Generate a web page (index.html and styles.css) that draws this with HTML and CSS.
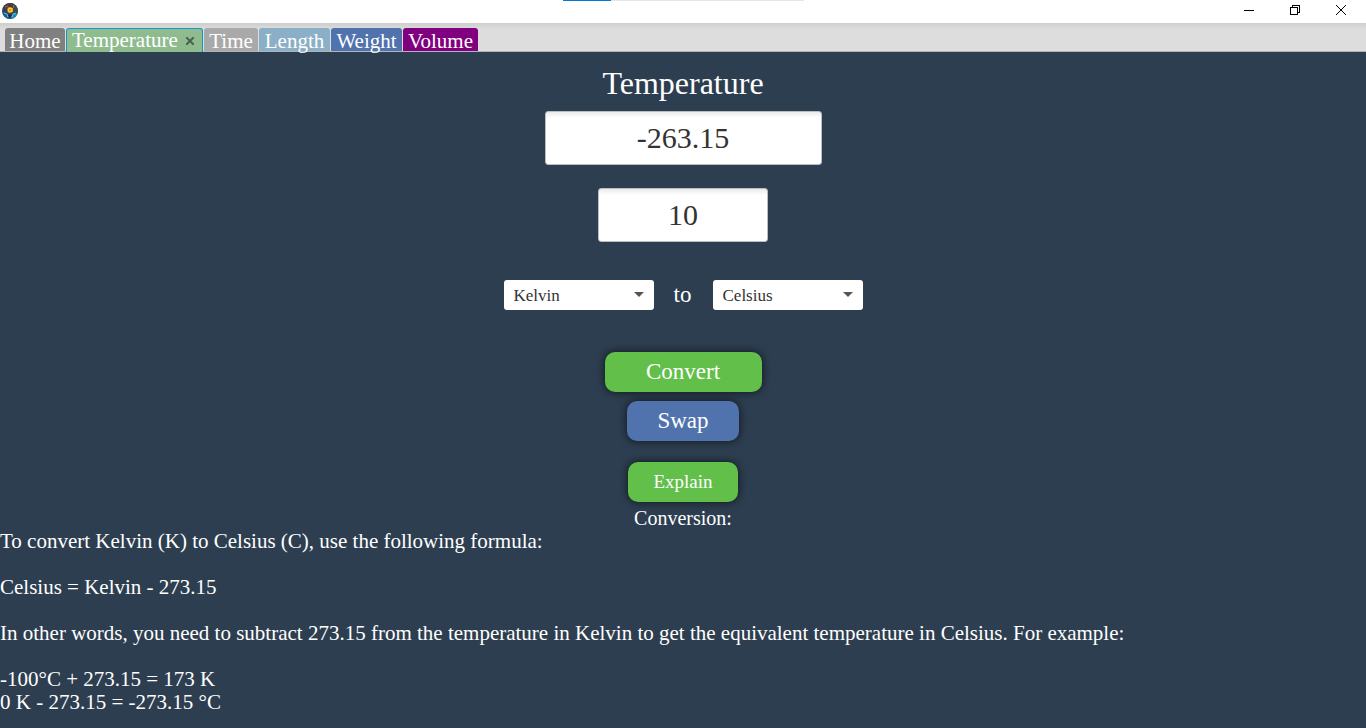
FILE: index.html
```html
<!DOCTYPE html>
<html lang="en">
<head>
<meta charset="utf-8">
<title>Unit Converter</title>
<link rel="stylesheet" href="styles.css">
</head>
<body>
<header class="titlebar">
  <svg class="app-icon" viewBox="0 0 16 16" aria-hidden="true">
    <circle cx="8" cy="8" r="8" fill="#28475c"/>
    <path d="M1 5a8 8 0 0 1 11-4L9 4 5 4 3 7z" fill="#4b3b35"/>
    <path d="M12 1a8 8 0 0 1 3 10l-3-2-1-5z" fill="#3f4c46"/>
    <path d="M1 9l3 1 2 3 1 3A8 8 0 0 1 1 9z" fill="#1c5f91"/>
    <path d="M9 13l3-3 3 1a8 8 0 0 1-6 5z" fill="#2189c4"/>
    <path d="M2 10l3 1 1 3M10 14l1-3 3-1" fill="none" stroke="#58c4ee"/>
    <path d="M3 4l3-1M11 2l1 3" fill="none" stroke="#a7674a"/>
    <circle cx="8" cy="7" r="3" fill="#e8702a"/>
    <path d="M8 4l1 1 2 0 0 2 0 2-2 0-2 1-1-2 0-3z" fill="#f9a81f"/>
    <circle cx="8" cy="7" r="2" fill="#ffd83a"/>
    <circle cx="8" cy="7" r="1" fill="#f26a2a"/>
    <path d="M6 12h4l-2 3z" fill="#182b3c"/>
  </svg>
  <div class="progress"><div class="progress-fill"></div></div>
  <div class="window-controls">
    <button class="window-button" aria-label="Minimize"><svg viewBox="0 0 10 10" shape-rendering="crispEdges"><path d="M0 5.5h10"/></svg></button>
    <button class="window-button" aria-label="Restore"><svg viewBox="0 0 10 10" shape-rendering="crispEdges"><path d="M.5 2.5h7v7h-7zM2.5 2.5v-2h7v7h-2"/></svg></button>
    <button class="window-button" aria-label="Close"><svg viewBox="0 0 10 10"><path d="M0 0l10 10M10 0L0 10"/></svg></button>
  </div>
</header>
<nav class="tabs" role="tablist">
  <button class="tab tab-home" role="tab">Home</button>
  <div class="tab tab-temperature">
    <button class="tab-label" role="tab" aria-selected="true">Temperature</button>
    <button class="tab-close" aria-label="Close tab"><svg viewBox="0 0 8 8"><path d="M0 0l8 8M8 0L0 8"/></svg></button>
  </div>
  <button class="tab tab-time" role="tab">Time</button>
  <button class="tab tab-length" role="tab">Length</button>
  <button class="tab tab-weight" role="tab">Weight</button>
  <button class="tab tab-volume" role="tab">Volume</button>
</nav>
<main class="converter">
  <h1 class="title">Temperature</h1>
  <input class="value value-result" type="text" aria-label="Result" value="-263.15">
  <input class="value value-input" type="text" aria-label="Value" value="10">
  <div class="units">
    <div class="unit">
      <select class="unit-select" aria-label="From unit"><option>Kelvin</option><option>Celsius</option></select>
      <svg class="arrow" viewBox="0 0 10 5" aria-hidden="true"><path d="M0 0h10L5 5z"/></svg>
    </div>
    <span class="to">to</span>
    <div class="unit">
      <select class="unit-select" aria-label="To unit"><option>Celsius</option><option>Kelvin</option></select>
      <svg class="arrow" viewBox="0 0 10 5" aria-hidden="true"><path d="M0 0h10L5 5z"/></svg>
    </div>
  </div>
  <button class="action convert">Convert</button>
  <button class="action swap">Swap</button>
  <button class="action explain">Explain</button>
  <p class="caption">Conversion:</p>
  <div class="explanation">To convert Kelvin (K) to Celsius (C), use the following formula:

Celsius = Kelvin - 273.15

In other words, you need to subtract 273.15 from the temperature in Kelvin to get the equivalent temperature in Celsius. For example:

-100°C + 273.15 = 173 K
0 K - 273.15 = -273.15 °C</div>
</main>
</body>
</html>
```
FILE: styles.css
```css
* { box-sizing: border-box; }
body {
  margin: 0;
  min-height: 100vh;
  background: #2d3e50;
  color: #fff;
  font-family: "Liberation Serif", serif;
}
button, input, select { font-family: inherit; }
button { margin: 0; padding: 0; border: 0; color: inherit; }

.titlebar {
  display: grid;
  grid-template-columns: 1fr 241px 1fr;
  height: 23px;
  background: #fff;
}
.app-icon { width: 16px; height: 16px; margin: 3px 2px; }
.progress { height: 1px; background: #e6e6e6; }
.progress-fill { width: 20%; height: 1px; background: #0078d7; }
.window-controls { display: flex; justify-content: flex-end; align-items: flex-start; padding-right: 2px; }
.window-button { display: grid; place-items: center; width: 46px; height: 20px; background: none; }
.window-button svg { width: 10px; height: 10px; fill: none; stroke: #000; overflow: visible; }

.tabs {
  display: flex;
  gap: 1px;
  height: 29px;
  padding: 5px 5px 0;
  border-bottom: 1px solid #b4b4b4;
  background: linear-gradient(#cecece, #dddddd 6px);
}
.tab {
  display: flex;
  align-items: center;
  justify-content: center;
  height: 23px;
  padding-top: 3px;
  border-radius: 3px 3px 0 0;
  font-size: 21px;
  line-height: 21px;
}
.tab-label { background: none; font-size: 21px; line-height: 21px; }
.tab-close { display: grid; place-items: center; width: 16px; height: 16px; background: none; }
.tab-close svg { width: 8px; height: 8px; stroke: #4f5f50; stroke-width: 2; }
.tab-home { width: 60px; background: #808080; }
.tab-temperature { justify-content: space-between; width: 137px; height: 24px; padding: 0 4px 0 5px; border: 1px solid #1398c8; border-bottom: 0; background: #8fbc8f; }
.tab-time { width: 54px; background: #a9a9a9; }
.tab-length { width: 71px; background: #8aafc6; }
.tab-weight { width: 71px; background: #5072ad; }
.tab-volume { width: 75px; background: #800080; }

.converter { display: flex; flex-direction: column; align-items: center; }
.title { margin: 13px 0 10px; font-size: 32px; line-height: 36px; font-weight: 400; }
.value {
  height: 54px;
  border: 1px solid #b9bec3;
  border-radius: 3px;
  background: linear-gradient(#ebebeb, #fff 6px);
  color: #333;
  font-size: 30px;
  text-align: center;
}
.value-result { width: 277px; }
.value-input { width: 170px; margin-top: 23px; }
.units { display: flex; align-items: center; gap: 20px; margin-top: 38px; }
.unit { position: relative; }
.unit-select {
  display: block;
  appearance: none;
  width: 150px;
  height: 30px;
  padding: 0 10px;
  border: 0;
  border-radius: 3px;
  background: #fff;
  color: #333;
  font-size: 17px;
}
.arrow { position: absolute; top: 12px; right: 10px; width: 10px; height: 5px; fill: #555; pointer-events: none; }
.to { width: 19px; font-size: 23px; line-height: 24px; }
.action {
  height: 40px;
  border-radius: 10px;
  background: #61bf4a;
  box-shadow: 0 0 8px rgba(0, 0, 0, 0.7);
  font-size: 23px;
}
.convert { width: 157px; margin-top: 42px; }
.swap { width: 112px; margin-top: 9px; background: #5072ad; }
.explain { width: 110px; margin-top: 21px; font-size: 19px; }
.caption { margin: 5px 0 0; font-size: 20px; line-height: 23px; }
.explanation { align-self: stretch; font-size: 21px; line-height: 23px; white-space: pre-wrap; }
```
